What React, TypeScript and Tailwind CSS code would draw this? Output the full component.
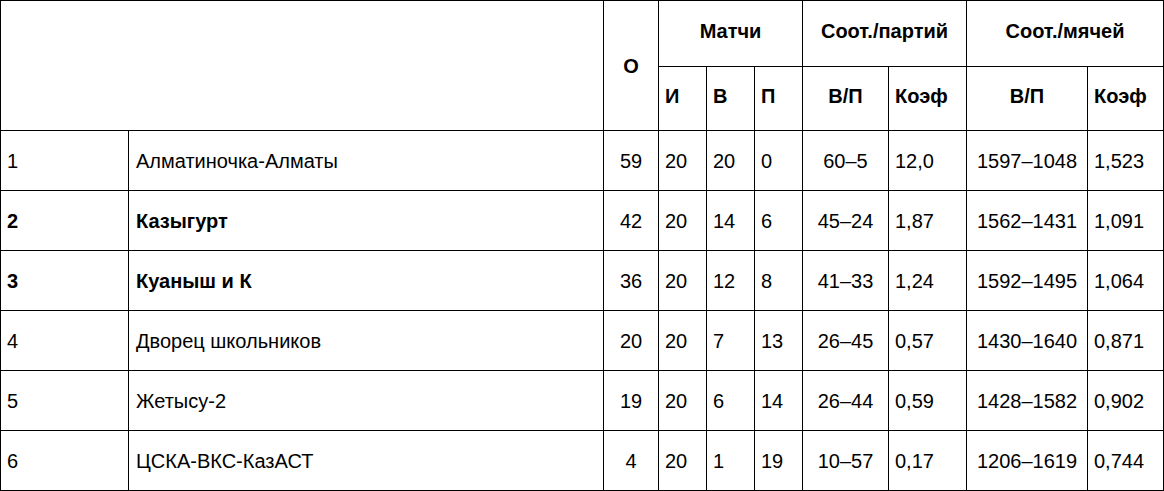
import React from "react";

// standings row
interface Team {
  place: number;
  name: string;
  bold?: boolean;
  points: number;
  played: number;
  won: number;
  lost: number;
  sets: string;
  setsRatio: string;
  balls: string;
  ballsRatio: string;
}

const teams: Team[] = [
  { place: 1, name: "Алматиночка-Алматы", points: 59, played: 20, won: 20, lost: 0, sets: "60–5", setsRatio: "12,0", balls: "1597–1048", ballsRatio: "1,523" },
  { place: 2, name: "Казыгурт", bold: true, points: 42, played: 20, won: 14, lost: 6, sets: "45–24", setsRatio: "1,87", balls: "1562–1431", ballsRatio: "1,091" },
  { place: 3, name: "Куаныш и К", bold: true, points: 36, played: 20, won: 12, lost: 8, sets: "41–33", setsRatio: "1,24", balls: "1592–1495", ballsRatio: "1,064" },
  { place: 4, name: "Дворец школьников", points: 20, played: 20, won: 7, lost: 13, sets: "26–45", setsRatio: "0,57", balls: "1430–1640", ballsRatio: "0,871" },
  { place: 5, name: "Жетысу-2", points: 19, played: 20, won: 6, lost: 14, sets: "26–44", setsRatio: "0,59", balls: "1428–1582", ballsRatio: "0,902" },
  { place: 6, name: "ЦСКА-ВКС-КазАСТ", points: 4, played: 20, won: 1, lost: 19, sets: "10–57", setsRatio: "0,17", balls: "1206–1619", ballsRatio: "0,744" },
];

const cell = "bg-white flex items-center";
const left = `${cell} pl-[6px]`;
const center = `${cell} justify-center`;

export default function App() {
  return (
    <div className="w-[1164px] h-[491px] bg-white text-black text-[20px] font-['Liberation_Sans',Arial,sans-serif]">
      <div className="grid grid-cols-[127px_474px_54px_47px_47px_47px_85px_77px_120px_75px] grid-rows-[65px_63px_repeat(6,59px)] gap-px bg-black p-px">
        {/* header */}
        <div className={`${cell} col-span-2 row-span-2`} />
        <div className={`${center} row-span-2 font-bold`}>О</div>
        <div className={`${center} col-span-3 font-bold pb-[6px]`}>Матчи</div>
        <div className={`${center} col-span-2 font-bold pb-[6px]`}>Соот./партий</div>
        <div className={`${center} col-span-2 font-bold pb-[6px]`}>Соот./мячей</div>
        <div className={`${left} font-bold pb-[5px]`}>И</div>
        <div className={`${left} font-bold pb-[5px]`}>В</div>
        <div className={`${left} font-bold pb-[5px]`}>П</div>
        <div className={`${center} font-bold pb-[5px]`}>В/П</div>
        <div className={`${left} font-bold pb-[5px]`}>Коэф</div>
        <div className={`${center} font-bold pb-[5px]`}>В/П</div>
        <div className={`${left} font-bold pb-[5px]`}>Коэф</div>

        {teams.map((t) => (
          <React.Fragment key={t.place}>
            <div className={`${left} ${t.bold ? "font-bold" : ""}`}>{t.place}</div>
            <div className={`${cell} pl-[7px] ${t.bold ? "font-bold" : ""}`}>{t.name}</div>
            <div className={center}>{t.points}</div>
            <div className={left}>{t.played}</div>
            <div className={left}>{t.won}</div>
            <div className={left}>{t.lost}</div>
            <div className={center}>{t.sets}</div>
            <div className={left}>{t.setsRatio}</div>
            <div className={center}>{t.balls}</div>
            <div className={left}>{t.ballsRatio}</div>
          </React.Fragment>
        ))}
      </div>
    </div>
  );
}
